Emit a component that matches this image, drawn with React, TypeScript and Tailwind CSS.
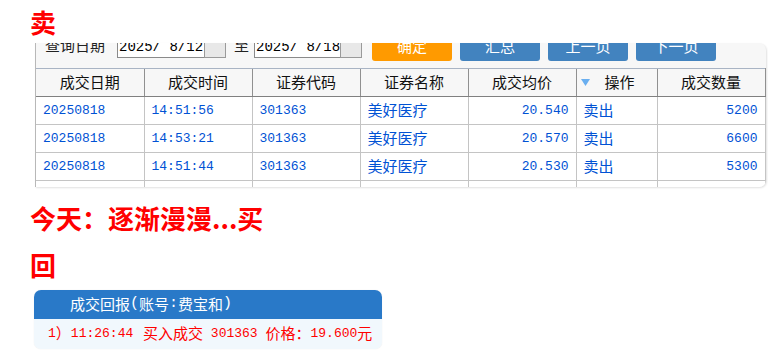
const cjk = { fontFamily: '"Noto Sans CJK SC", "Noto Sans", sans-serif' };
const mono = { fontFamily: '"Liberation Mono", "Noto Sans CJK SC", monospace' };

const rows = [
  { date: "20250818", time: "14:51:56", code: "301363", name: "美好医疗", price: "20.540", op: "卖出", qty: "5200" },
  { date: "20250818", time: "14:53:21", code: "301363", name: "美好医疗", price: "20.570", op: "卖出", qty: "6600" },
  { date: "20250818", time: "14:51:44", code: "301363", name: "美好医疗", price: "20.530", op: "卖出", qty: "5300" },
];

const heads = ["成交日期", "成交时间", "证券代码", "证券名称", "成交均价", "操作", "成交数量"];
const widths = ["w-[108px]", "w-[108px]", "w-[108px]", "w-[108px]", "w-[108px]", "w-[81px]", "w-[108px]"];

const DateBox = ({ value, w }: { value: string; w: string }) => (
  <div className="flex h-[22px] items-stretch">
    <div
      className={`${w} overflow-hidden whitespace-pre border border-r-0 border-[#8a8a8a] bg-white pl-[1px] text-[14px] leading-[20px] text-black`}
      style={mono}
    >
      {value}
    </div>
    <div className="w-[22px] border border-[#9a9a9a] bg-[#e8e8e8]"></div>
  </div>
);

const Btn = ({ text, color }: { text: string; color: string }) => (
  <div
    className={`flex h-[26px] w-[80px] items-end justify-center rounded-[3px] pb-[6px] text-[15px] leading-[18px] text-white ${color}`}
    style={cjk}
  >
    {text}
  </div>
);

export default function App() {
  return (
    <div className="h-[364px] w-[768px] overflow-hidden bg-white pl-[30px] pt-[4px]" style={cjk}>
      <div className="text-[26px] font-bold leading-[36px] text-[#ff0000]">卖</div>

      <div className="ml-[5px] mt-[3px] w-[731px] overflow-hidden rounded-r-[7px] border-l border-[#b8b8b8] bg-[#f7f7f7] shadow-[1px_1px_2px_rgba(0,0,0,0.12)]">
        <div className="flex h-[25px] items-end overflow-hidden">
          <div className="mb-[14px] ml-[9px] whitespace-nowrap text-[15px] leading-[18px] text-[#222]">查询日期</div>
          <div className="mb-[10px] ml-[12px]">
            <DateBox value="2025/ 8/12" w="w-[87px]" />
          </div>
          <div className="mb-[14px] ml-[8px] text-[15px] leading-[18px] text-[#222]">至</div>
          <div className="mb-[10px] ml-[5px]">
            <DateBox value="2025/ 8/18" w="w-[86px]" />
          </div>
          <div className="mb-[7px] ml-[10px] flex gap-[8px]">
            <Btn text="确定" color="bg-[#ff9a00]" />
            <Btn text="汇总" color="bg-[#4283bf]" />
            <Btn text="上一页" color="bg-[#4283bf]" />
            <Btn text="下一页" color="bg-[#4283bf]" />
          </div>
        </div>

        <table className="w-[729px] table-fixed border-collapse">
          <thead>
            <tr className="h-[28px] bg-[#f7f7f7]">
              {heads.map((h, i) => (
                <th
                  key={h}
                  className={`${widths[i]} relative border-t border-b border-t-[#a9b4c4] border-b-[#808080] p-0 text-center text-[15px] font-normal text-[#111] ${i > 0 ? "border-l border-l-[#909090]" : ""} ${i === 6 ? "border-r border-r-[#909090]" : ""}`}
                >
                  {i === 5 && (
                    <svg className="absolute left-[4px] top-[10px]" width="9" height="7" viewBox="0 0 9 7">
                      <path d="M0 0 L9 0 L4.5 7 Z" fill="#6aaff0" />
                    </svg>
                  )}
                  <span className={i === 5 ? "pl-[6px]" : ""}>{h}</span>
                </th>
              ))}
            </tr>
          </thead>
          <tbody className="bg-white">
            {rows.map((r, idx) => (
              <tr key={idx} className="h-[28px] border-b border-[#c4c4c4] text-[#0052d4]">
                <td className="pl-[7px] text-[13px]" style={mono}>{r.date}</td>
                <td className="border-l border-[#c4c4c4] pl-[7px] text-[13px]" style={mono}>{r.time}</td>
                <td className="border-l border-[#c4c4c4] pl-[7px] text-[13px]" style={mono}>{r.code}</td>
                <td className="border-l border-[#c4c4c4] pl-[7px] text-[15px]">{r.name}</td>
                <td className="border-l border-[#c4c4c4] pr-[7px] text-right text-[13px]" style={mono}>{r.price}</td>
                <td className="border-l border-[#c4c4c4] pl-[7px] text-[15px]">{r.op}</td>
                <td className="border-l border-r border-[#c4c4c4] pr-[7px] text-right text-[13px]" style={mono}>{r.qty}</td>
              </tr>
            ))}
            <tr className="h-[6px]">
              {heads.map((h, i) => (
                <td key={h} className={`p-0 ${i > 0 ? "border-l border-[#c4c4c4]" : ""} ${i === 6 ? "border-r border-[#c4c4c4]" : ""}`}></td>
              ))}
            </tr>
          </tbody>
        </table>
      </div>

      <div className="mt-[7px] w-[250px] text-[26px] font-bold leading-[47px] text-[#ff0000]">
        今天：逐渐漫漫...买回
      </div>

      <div className="ml-[4px] mt-[2px] w-[348px] overflow-hidden rounded-[7px] shadow-[0_0_1px_rgba(0,0,0,0.15)]">
        <div className="flex h-[29px] items-center bg-[#2979c8] pl-[36px] text-[15px] text-white">
          成交回报<span style={mono}>(</span>账号<span style={mono}>:</span>费宝和<span style={mono}>)</span>
        </div>
        <div className="flex h-[30px] items-center bg-[#f1f8fd] pl-[14px] text-[13px] text-[#ff0000]" style={mono}>
          <span>1</span>
          <span className="text-[15px]" style={cjk}>）</span>
          <span className="mr-[2px] whitespace-pre">11:26:44 </span>
          <span className="text-[15px]" style={cjk}>买入成交</span>
          <span className="whitespace-pre"> 301363 </span>
          <span className="text-[15px]" style={cjk}>价格：</span>
          <span>19.600</span>
          <span className="text-[15px]" style={cjk}>元</span>
        </div>
      </div>
    </div>
  );
}
